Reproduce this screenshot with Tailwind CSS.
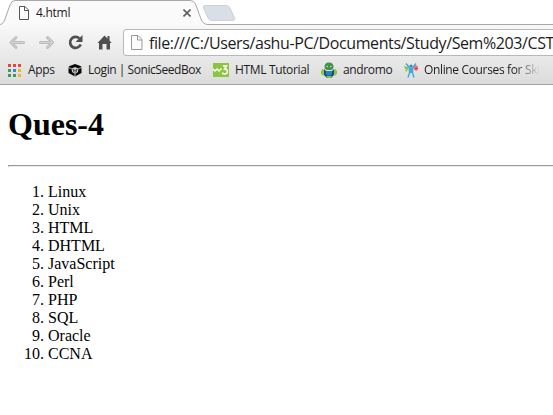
<!DOCTYPE html>
<html lang="en">
<head>
<meta charset="utf-8">
<title>4.html</title>
<script src="https://cdn.jsdelivr.net/npm/@tailwindcss/browser@4"></script>
</head>
<body class="h-[415px] w-[553px] overflow-hidden bg-white text-black">
<header class="h-[85px] border-b border-[#a3a3a3] bg-linear-to-b from-[#fafafa] from-25% to-[#dcdcdc] font-['Open_Sans',sans-serif] text-[12px] whitespace-nowrap text-[#1c1c1c]">
  <div class="relative h-[25px] bg-white">
    <svg class="absolute inset-0" width="553" height="25" viewBox="0 0 553 25" fill="none">
      <path d="M0 24.5C3 24 4 22 5 19L10 5Q11.500 .5 15 .5H190Q194 .5 195.500 4L201 19Q203 24.500 208 24.500H553V25H0Z" fill="#fafafa"/>
      <path d="M0 24.500C3 24 4 22 5 19L10 5Q11.500 .5 15 .5H190Q194 .5 195.500 4L201 19Q203 24.500 208 24.500H553" stroke="#a8a8a8"/>
      <path d="M205 5.500H226Q229 5.500 230 8L234.500 18Q235.500 20.500 232 20.500H212Q209 20.500 208 18L203.500 8Q202.500 5.500 205 5.500Z" fill="#d9dfe7" stroke="#cdd1d7"/>
    </svg>
    <div class="relative flex h-[25px] items-center pl-[19px]">
      <svg width="11" height="14" viewBox="0 0 11 14" fill="#fff" stroke="#555"><path d="M.5.5H6L9.500 4V13.500H.5ZM5.500.5V4.500H9.500"/></svg>
      <span class="ml-[6px] w-[140px] tracking-[-0.27px]">4.html</span>
      <svg class="ml-[7px]" width="8" height="8" viewBox="0 0 8 8" stroke="#5c5c5c" stroke-width="1.600"><path d="M.5.500L7.500 7.500M7.500.5L.5 7.500"/></svg>
    </div>
  </div>
  <div class="flex h-[35px] items-center">
    <svg class="shrink-0" width="123" height="35" viewBox="0 0 123 35" fill="none">
      <path d="M23.500 17.500H12M16 12.500L11 17.500L16 22.500M40.500 17.500H52M47.500 12.500L52.500 17.500L47.500 22.500" stroke="#bcbcbc" stroke-width="3" stroke-linecap="round" stroke-linejoin="round"/>
      <path d="M23.500 17.500H12M16 12.500L11 17.500L16 22.500M40.500 17.500H52M47.500 12.500L52.500 17.500L47.500 22.500" stroke="#d6d6d6" stroke-linecap="round"/>
      <path d="M79.300 13.300A5.500 5.500 0 1 0 80.700 19.500" stroke="#505050" stroke-width="2.700"/>
      <path d="M82.500 10V17H75.500Z" fill="#505050"/>
      <path d="M97.500 18L104.500 10.500L107.500 13.500V11H109.500V15.500L111.700 18H110V24.500H106.500V19H102.500V24.500H99V18Z" fill="#505050"/>
    </svg>
    <div class="flex h-[27px] w-[450px] shrink-0 items-center rounded-[3px] border border-[#b8b8b8] bg-white pl-[7px] text-[16px]">
      <svg class="shrink-0" width="12" height="15" viewBox="0 0 12 15" fill="#fbfbfb" stroke="#999"><path d="M.5.500H7L11 4.500V14.500H.5ZM6.500.5V5H11"/></svg>
      <span class="ml-[6px] tracking-[-0.4px]">file:///C:/Users/ashu-PC/Documents/Study/Sem%203/CST</span>
    </div>
  </div>
  <nav class="flex h-[20px] items-center">
    <div class="flex w-[60px] items-center pl-[8px]">
      <svg width="13" height="13" viewBox="0 0 13 13"><path fill="#e8453c" d="M0 0h3v3H0zM5 0h3v3H5zM10 0h3v3H10z"/><path fill="#3c9b58" d="M0 5h3v3H0zM0 10h3v3H0zM5 10h3v3H5z"/><path fill="#3b82e8" d="M5 5h3v3H5z"/><path fill="#f2b51d" d="M10 5h3v3h-3zM10 10h3v3h-3z"/></svg>
      <span class="ml-[7px] tracking-[-0.3px]">Apps</span>
    </div>
    <div class="flex w-[145px] items-center pl-[8px]">
      <svg class="shrink-0" width="14" height="14" viewBox="0 0 14 14"><path fill="#080808" d="M7 1L13 3.300L13.500 4V10L7 13.500L.5 10V4L1 3.300Z"/><path d="M0 4.500L3.500 5.500M14 4.500L10.500 5.500M7 13.500V11" fill="none" stroke="#bbb"/><path fill="#ccc" d="M3.500 5.500L7 4L10.500 5.500L10 9L7 11L4 9Z"/><path d="M4.500 6.500L7 7.500L9.500 6.500M7 7.500V10M5.500 6V9M8.500 6V9" stroke="#333" stroke-width=".7" fill="none"/></svg>
      <span class="ml-[6px] tracking-[-0.45px]">Login | SonicSeedBox</span>
    </div>
    <div class="flex w-[108px] items-center pl-[8px]">
      <svg class="shrink-0" width="16" height="14" viewBox="0 0 16 14"><path fill="#8cc63f" d="M0 0h16v14H0z"/><path d="M0 6L2 8L4 6L6 8L8.500 5.500M10 3H13.500L11.500 6Q14.500 6 14.300 8.500Q14 11.200 11.500 11Q9.500 11 9.500 9.500" fill="none" stroke="#fff" stroke-width="1.500"/></svg>
      <span class="ml-[6px] tracking-[-0.35px]">HTML Tutorial</span>
    </div>
    <div class="flex w-[82px] items-center pl-[8px]">
      <svg class="shrink-0" width="16" height="16" viewBox="0 0 16 16"><path d="M1.500 7L0 9V12L2.500 14L3.500 8M14.500 7L16 9V12L13.500 14L12.500 8" fill="#8bc53f"/><path d="M3.500 6Q3 .500 8 .500T12.500 6L10.500 8H5.500Z" fill="#419347"/><path d="M3 7L5 9H11L13 7V13L10 16H6L3 13Z" fill="#174e83"/><path d="M5 9H11V12L9.500 13.500H6.500L5 12Z" fill="#2f80b8"/><path d="M5 14H11L9.500 16H6.500Z" fill="#8bc53f"/><circle cx="6.200" cy="4.500" r=".8" fill="#c5e6a8"/><circle cx="9.800" cy="4.500" r=".8" fill="#c5e6a8"/></svg>
      <span class="ml-[6px] tracking-[-0.35px]">andromo</span>
    </div>
    <div class="flex w-[145px] items-center pl-[8px]">
      <svg class="shrink-0" width="16" height="16" viewBox="0 0 16 16" fill="none"><path d="M1 4L5 5L6 8L2 7ZM2 8L5 7.500L3 10Z" fill="#8bc34a"/><path d="M10 6L12 3L15 4L14 9L11 8Z" fill="#ed7780"/><path d="M3 1.500L7 6.500H9L13 1.500M6.500 8V11L5 15.500M9.500 8V11L11 15.500" stroke="#3caad8" stroke-width="1.400"/><path d="M6 6H10V11H6Z" fill="#3caad8"/><circle cx="8" cy="4" r="1.600" fill="#2c8fc0"/><path d="M12 6.500H15" stroke="#d83745" stroke-width="1.500"/></svg>
      <span class="ml-[5px] bg-linear-to-r from-[#1c1c1c] from-78% to-transparent bg-clip-text tracking-[-0.35px] text-transparent">Online Courses for Ski</span>
    </div>
  </nav>
</header>
<main class="px-2 pt-[21px] font-['Liberation_Serif',serif] text-[16px] leading-[18px]">
  <h1 class="text-[32px] leading-[37px] font-bold">Ques-4</h1>
  <hr class="-mr-2 mt-[22px] h-[2px] border-t border-b border-l border-t-[#999] border-b-[#eee] border-l-[#999]">
  <ol class="mt-[16px] list-decimal pl-[40px]">
    <li>Linux</li><li>Unix</li><li>HTML</li><li>DHTML</li><li>JavaScript</li><li>Perl</li><li>PHP</li><li>SQL</li><li>Oracle</li><li>CCNA</li>
  </ol>
</main>
</body>
</html>
